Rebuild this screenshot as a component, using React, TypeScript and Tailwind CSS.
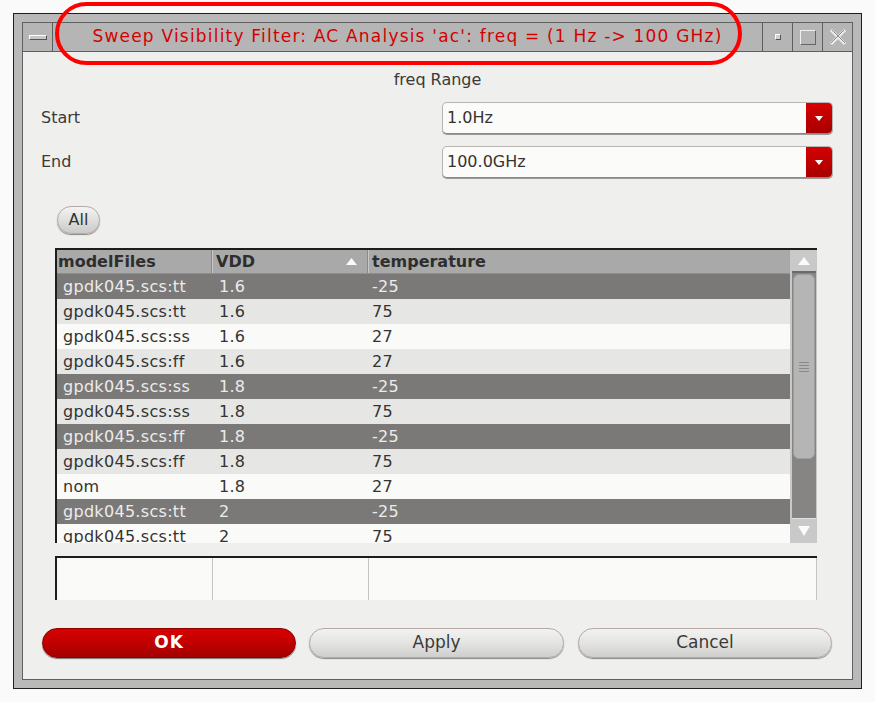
import React from "react";

const rows: { m: string; v: string; t: string; sel: boolean }[] = [
  { m: "gpdk045.scs:tt", v: "1.6", t: "-25", sel: true },
  { m: "gpdk045.scs:tt", v: "1.6", t: "75", sel: false },
  { m: "gpdk045.scs:ss", v: "1.6", t: "27", sel: false },
  { m: "gpdk045.scs:ff", v: "1.6", t: "27", sel: false },
  { m: "gpdk045.scs:ss", v: "1.8", t: "-25", sel: true },
  { m: "gpdk045.scs:ss", v: "1.8", t: "75", sel: false },
  { m: "gpdk045.scs:ff", v: "1.8", t: "-25", sel: true },
  { m: "gpdk045.scs:ff", v: "1.8", t: "75", sel: false },
  { m: "nom", v: "1.8", t: "27", sel: false },
  { m: "gpdk045.scs:tt", v: "2", t: "-25", sel: true },
  { m: "gpdk045.scs:tt", v: "2", t: "75", sel: false },
];

const font = "font-['DejaVu_Sans',sans-serif]";

function Combo({ value }: { value: string }) {
  return (
    <div className="w-[391px] h-[32px] mr-[19px] flex rounded-[5px] border border-[#b9b4b2] border-b-[#8a8888] bg-[#fbfbfa] shadow-[0_1px_0_#9a9a9a]">
      <div className="flex-1 flex items-center pl-[4px] text-[16px] text-[#333]">{value}</div>
      <div className="w-[26px] h-full rounded-r-[4px] bg-gradient-to-b from-[#d60000] to-[#a80000] flex items-center justify-center">
        <svg width="10" height="7" viewBox="0 0 10 7">
          <polygon points="1,1 9,1 5,6" fill="#fff" />
        </svg>
      </div>
    </div>
  );
}

function Pill({ label, red }: { label: string; red?: boolean }) {
  return red ? (
    <div className="h-[30px] w-[254px] rounded-full bg-gradient-to-b from-[#d80000] via-[#c00000] to-[#a40000] border border-[#8c0000] shadow-[0_1px_1px_#777] flex items-center justify-center text-white font-bold text-[17px] tracking-[1px]">
      {label}
    </div>
  ) : (
    <div className="h-[30px] w-[255px] rounded-full bg-gradient-to-b from-[#f2f2f0] via-[#e4e4e2] to-[#cfcfcd] border border-[#b9a9a9] shadow-[0_1px_1px_#888] flex items-center justify-center text-[#3a3a3a] text-[17px]">
      {label}
    </div>
  );
}

export default function App() {
  return (
    <div className={`w-[875px] h-[702px] bg-[#fafafa] pl-[13px] pt-[13px] relative ${font}`}>
      <div className="w-[849px] h-[676px] border border-[#1e1e1e] bg-[#b9b9b9] p-[8px]">
        <div className="h-full flex flex-col border border-[#606060]">
          {/* title bar */}
          <div className="h-[29px] flex bg-[#b5b5b5] border-b border-[#5e5e5e]">
            <div className="w-[30px] border-r border-[#5e5e5e] flex items-center justify-center">
              <div className="w-[18px] h-[5px] bg-[#c8c8c8] border-t border-l border-white border-b border-r border-b-[#555] border-r-[#555]" />
            </div>
            <div className="flex-1 border-r border-[#5e5e5e] flex items-center justify-center text-[#d40000] text-[17px] tracking-[1.2px] whitespace-nowrap">
              Sweep Visibility Filter: AC Analysis 'ac': freq = (1 Hz -&gt; 100 GHz)
            </div>
            <div className="w-[30px] border-r border-[#5e5e5e] flex items-center justify-center">
              <div className="w-[6px] h-[6px] bg-[#d0d0d0] border-t border-l border-white border-b border-r border-b-[#555] border-r-[#555]" />
            </div>
            <div className="w-[30px] border-r border-[#5e5e5e] flex items-center justify-center">
              <div className="w-[16px] h-[15px] border-t border-l border-[#f0f0f0] border-b border-r border-b-[#666] border-r-[#666]" />
            </div>
            <div className="w-[29px] flex items-center justify-center">
              <svg width="20" height="20" viewBox="0 0 20 20">
                <path d="M3 3 L17 17 M17 3 L3 17" stroke="#eeeeee" strokeWidth="3" />
                <path d="M4 3 L17 16 M16 3 L3 16" stroke="#8a8a8a" strokeWidth="1" fill="none" />
              </svg>
            </div>
          </div>

          {/* content */}
          <div className="flex-1 bg-[#efefed] flex flex-col">
            <div className="mt-[18px] h-[20px] flex items-center justify-center text-[16px] text-[#3a3a3a]">freq Range</div>

            <div className="mt-[12px] flex items-center">
              <div className="flex-1 pl-[18px] text-[16px] text-[#3a3a3a]">Start</div>
              <Combo value="1.0Hz" />
            </div>
            <div className="mt-[12px] flex items-center">
              <div className="flex-1 pl-[18px] text-[16px] text-[#3a3a3a]">End</div>
              <Combo value="100.0GHz" />
            </div>

            <div className="mt-[28px] ml-[34px] w-[43px] h-[28px] rounded-full bg-gradient-to-b from-[#f4f4f2] to-[#cacac8] border border-[#b7aaaa] shadow-[0_1px_1px_#888] flex items-center justify-center text-[16px] text-[#333]">
              All
            </div>

            {/* table */}
            <div className="mt-[14px] ml-[32px] w-[762px] h-[295px] border-t-2 border-l-2 border-[#1d1d1d] flex bg-[#c9c9c9]">
              <div className="w-[733px] flex flex-col overflow-hidden">
                <div className="h-[23px] shrink-0 flex bg-[#a9a9a9] text-[16px] font-bold text-[#2e2e2e]">
                  <div className="w-[155px] pl-[1px] flex items-center border-r border-[#8a8a8a]">modelFiles</div>
                  <div className="w-[156px] pl-[3px] flex items-center justify-between pr-[10px] border-r border-[#8a8a8a] border-l border-l-[#c8c8c8]">
                    <span>VDD</span>
                    <svg width="11" height="7" viewBox="0 0 11 7">
                      <polygon points="0,7 11,7 5.5,0" fill="#fafafa" />
                    </svg>
                  </div>
                  <div className="flex-1 pl-[3px] flex items-center border-l border-[#c8c8c8]">temperature</div>
                </div>
                <div className="h-[1px] shrink-0 bg-[#8f8f8f]" />
                {rows.map((r, i) => (
                  <div
                    key={i}
                    className={`h-[25px] shrink-0 flex items-center text-[16px] tracking-[0.3px] ${
                      r.sel
                        ? "bg-[#7b7978] text-[#ececec]"
                        : i % 2 === 1
                        ? "bg-[#e6e7e5] text-[#333]"
                        : "bg-[#fafaf8] text-[#333]"
                    }`}
                  >
                    <div className="w-[155px] pl-[6px]">{r.m}</div>
                    <div className="w-[156px] pl-[7px]">{r.v}</div>
                    <div className="flex-1 pl-[4px]">{r.t}</div>
                  </div>
                ))}
              </div>
              {/* scrollbar */}
              <div className="ml-[2px] w-[24px] h-full flex flex-col bg-[#878584]">
                <div className="h-[23px] bg-[#c9c9c9] border-b-2 border-[#6a6a6a] flex items-center justify-center">
                  <svg width="12" height="8" viewBox="0 0 12 8">
                    <polygon points="0,8 12,8 6,0" fill="#fbfbfb" />
                  </svg>
                </div>
                <div className="mx-[1px] mt-[1px] h-[185px] rounded-[6px] bg-[#b5b5b5] border border-[#9f9f9f] flex items-center justify-center">
                  <div className="flex flex-col gap-[2px]">
                    <div className="w-[10px] h-[1px] bg-[#8a8a8a]" />
                    <div className="w-[10px] h-[1px] bg-[#8a8a8a]" />
                    <div className="w-[10px] h-[1px] bg-[#8a8a8a]" />
                    <div className="w-[10px] h-[1px] bg-[#8a8a8a]" />
                  </div>
                </div>
                <div className="flex-1" />
                <div className="h-[25px] bg-[#c9c9c9] border-t border-[#e0e0e0] flex items-center justify-center">
                  <svg width="12" height="10" viewBox="0 0 12 10">
                    <polygon points="0,0 12,0 6,10" fill="#fbfbfb" />
                  </svg>
                </div>
              </div>
            </div>

            {/* footer row */}
            <div className="mt-[13px] ml-[32px] w-[762px] h-[44px] border-t-2 border-l-2 border-[#1d1d1d] bg-[#fafaf8] flex">
              <div className="w-[156px] border-r border-[#c4c4c4]" />
              <div className="w-[156px] border-r border-[#c4c4c4]" />
              <div className="flex-1 border-r border-[#c4c4c4]" />
            </div>

            {/* buttons */}
            <div className="mt-[28px] pl-[19px] flex gap-[13px]">
              <Pill label="OK" red />
              <Pill label="Apply" />
              <div className="ml-[1px]">
                <div className="h-[30px] w-[254px] rounded-full bg-gradient-to-b from-[#f2f2f0] via-[#e4e4e2] to-[#cfcfcd] border border-[#b9a9a9] shadow-[0_1px_1px_#888] flex items-center justify-center text-[#3a3a3a] text-[17px]">
                  Cancel
                </div>
              </div>
            </div>
          </div>
        </div>
      </div>

      {/* red annotation */}
      <div className="absolute left-[55px] top-[2px] w-[687px] h-[63px] rounded-[32px] border-[4px] border-[#ff0000] pointer-events-none" />
    </div>
  );
}
